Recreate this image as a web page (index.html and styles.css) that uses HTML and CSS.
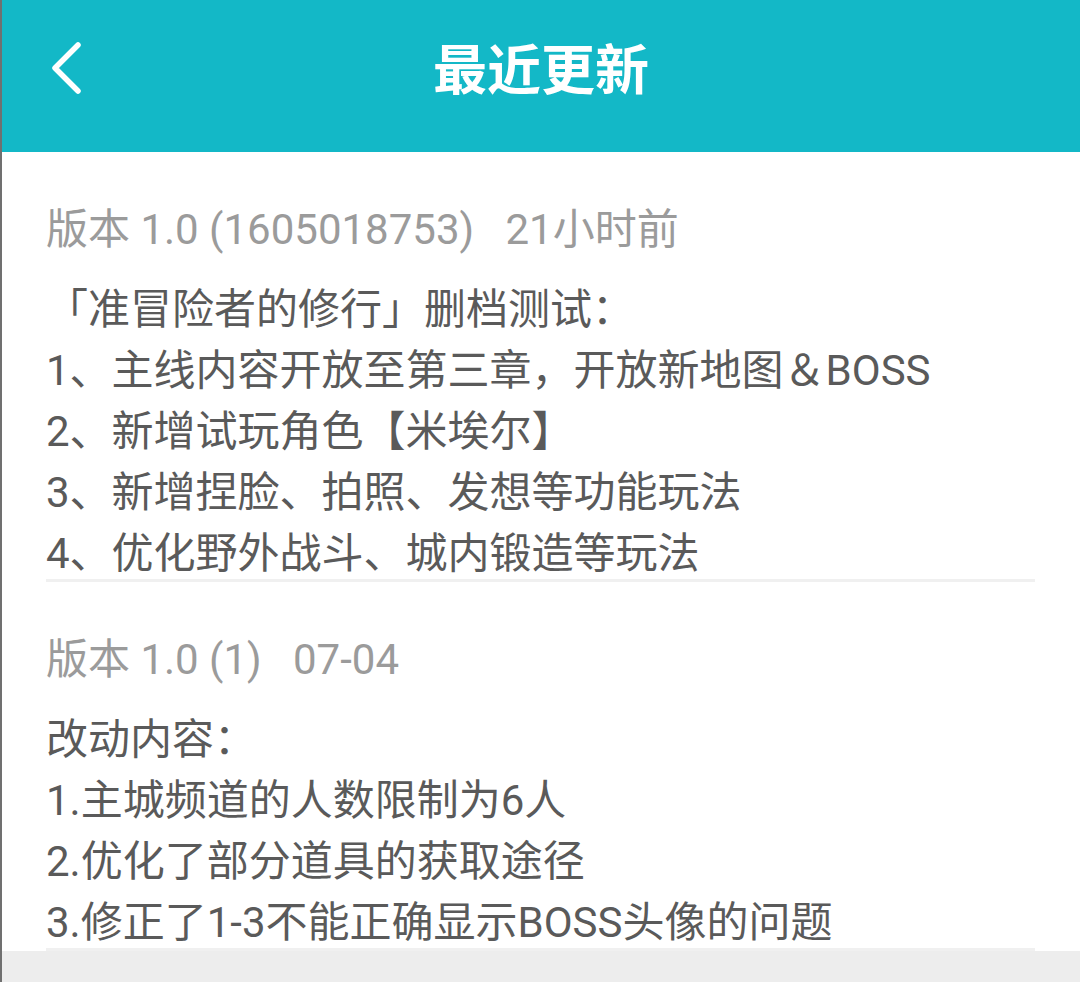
FILE: index.html
```html
<!DOCTYPE html>
<html lang="zh-CN">
<head>
<meta charset="utf-8">
<title>最近更新</title>
<link rel="stylesheet" href="styles.css">
</head>
<body>
<div class="app">
  <header class="topbar">
    <span class="back">
      <svg width="40" height="60" viewBox="0 0 40 60"><path d="M33 7 L10 30 L33 53" fill="none" stroke="#fff" stroke-width="5.5" stroke-linecap="round" stroke-linejoin="round"/></svg>
    </span>
    <h1 class="title">最近更新</h1>
  </header>
  <main class="list">
    <section class="item">
      <div class="ver">版本 1.0 (1605018753)&nbsp;&nbsp; 21小时前</div>
      <div class="notes">
        <p>「准冒险者的修行」删档测试：</p>
        <p>1、主线内容开放至第三章，开放新地图＆BOSS</p>
        <p>2、新增试玩角色【米埃尔】</p>
        <p>3、新增捏脸、拍照、发想等功能玩法</p>
        <p>4、优化野外战斗、城内锻造等玩法</p>
      </div>
    </section>
    <section class="item">
      <div class="ver">版本 1.0 (1)&nbsp;&nbsp; 07-04</div>
      <div class="notes">
        <p>改动内容：</p>
        <p>1.主城频道的人数限制为6人</p>
        <p>2.优化了部分道具的获取途径</p>
        <p>3.修正了1-3不能正确显示BOSS头像的问题</p>
      </div>
    </section>
  </main>
</div>
</body>
</html>
```
FILE: styles.css
```css
html, body {
  margin: 0;
  padding: 0;
  height: 100%;
}
body {
  background: #ededed;
  font-family: Roboto, "Noto Sans CJK SC", sans-serif;
}
.app {
  min-height: 100%;
  border-left: 2px solid #707070;
  box-sizing: border-box;
}
.topbar {
  height: 152px;
  background: #13b8c7;
  display: flex;
  align-items: center;
  justify-content: center;
  position: relative;
}
.back {
  position: absolute;
  left: 43px;
  top: 38px;
  width: 40px;
  height: 60px;
}
.back svg { display: block; }
.title {
  margin: 0;
  color: #fff;
  font-family: "Noto Sans CJK SC", sans-serif;
  font-weight: 700;
  font-size: 54px;
  line-height: 1;
  margin-top: -18px;
}
.list {
  background: #fff;
  padding: 0 45px 0 44px;
}
.item {
  padding-top: 48px;
  border-bottom: 3px solid #f0f0f0;
}
.ver {
  color: #9b9b9b;
  font-size: 42px;
  line-height: 60px;
  height: 60px;
}
.notes {
  margin-top: 19px;
  margin-bottom: -5px;
  color: #5a5a5a;
  font-size: 42px;
}
.notes p {
  margin: 0;
  line-height: 61px;
  white-space: nowrap;
}
```
